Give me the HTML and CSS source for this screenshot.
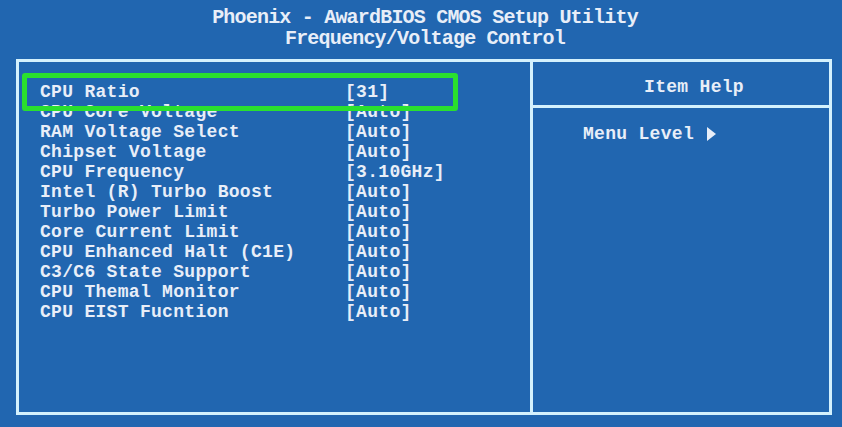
FILE: index.html
```html
<!DOCTYPE html>
<html>
<head>
<meta charset="utf-8">
<link rel="stylesheet" href="styles.css">
</head>
<body>
<div class="header">
  <div class="title">Phoenix - AwardBIOS CMOS Setup Utility</div>
  <div class="title">Frequency/Voltage Control</div>
</div>
<div class="screen">
  <div class="main">
    <div class="row"><span class="name">CPU Ratio</span><span class="val">[31]</span></div>
    <div class="row"><span class="name">CPU Core Voltage</span><span class="val">[Auto]</span></div>
    <div class="row"><span class="name">RAM Voltage Select</span><span class="val">[Auto]</span></div>
    <div class="row"><span class="name">Chipset Voltage</span><span class="val">[Auto]</span></div>
    <div class="row"><span class="name">CPU Frequency</span><span class="val">[3.10GHz]</span></div>
    <div class="row"><span class="name">Intel (R) Turbo Boost</span><span class="val">[Auto]</span></div>
    <div class="row"><span class="name">Turbo Power Limit</span><span class="val">[Auto]</span></div>
    <div class="row"><span class="name">Core Current Limit</span><span class="val">[Auto]</span></div>
    <div class="row"><span class="name">CPU Enhanced Halt (C1E)</span><span class="val">[Auto]</span></div>
    <div class="row"><span class="name">C3/C6 State Support</span><span class="val">[Auto]</span></div>
    <div class="row"><span class="name">CPU Themal Monitor</span><span class="val">[Auto]</span></div>
    <div class="row"><span class="name">CPU EIST Fucntion</span><span class="val">[Auto]</span></div>
  </div>
  <div class="help">
    <div class="help-head">Item Help</div>
    <div class="help-body">Menu Level <svg class="arrow" width="10" height="14" viewBox="0 0 10 14"><path d="M1 0 L10 7 L1 14 Z" fill="#e8eef8"/></svg></div>
  </div>
  <div class="highlight"></div>
</div>
</body>
</html>
```

FILE: styles.css
```css
html, body {
  margin: 0;
  padding: 0;
}
body {
  width: 842px;
  height: 427px;
  overflow: hidden;
  background: #2166b0;
  color: #e8eef8;
  font-family: "Liberation Mono", "DejaVu Sans Mono", monospace;
}
.header {
  padding-top: 7px;
  padding-left: 8px;
  height: 52px;
  box-sizing: border-box;
  text-align: center;
}
.title {
  font-size: 20px;
  line-height: 21px;
  letter-spacing: -0.8px;
  font-weight: bold;
}
.screen {
  position: relative;
  margin-top: 7px;
  margin-left: 16px;
  width: 816px;
  height: 356px;
  box-sizing: border-box;
  border: 3px solid #d4f1fd;
  display: flex;
}
.main {
  width: 514px;
  box-sizing: border-box;
  border-right: 3px solid #d4f1fd;
  padding-top: 20px;
  padding-left: 21px;
}
.row {
  display: flex;
  height: 20px;
  line-height: 20px;
  font-size: 18px;
  font-weight: bold;
  letter-spacing: 0.3px;
  white-space: pre;
}
.name {
  width: 305px;
}
.help {
  flex: 1;
  display: flex;
  flex-direction: column;
}
.help-head {
  height: 46px;
  box-sizing: border-box;
  border-bottom: 3px solid #d4f1fd;
  padding-top: 15px;
  padding-left: 26px;
  text-align: center;
  font-size: 18px;
  line-height: 20px;
  font-weight: bold;
  letter-spacing: 0.3px;
}
.help-body {
  padding-top: 16px;
  padding-left: 50px;
  font-size: 18px;
  line-height: 20px;
  font-weight: bold;
  letter-spacing: 0.3px;
  display: flex;
  align-items: center;
  gap: 12px;
}
.arrow {
  display: block;
}
.highlight {
  position: absolute;
  left: 3px;
  top: 11px;
  width: 436px;
  height: 38px;
  box-sizing: border-box;
  border: 5px solid #2ae02e;
  border-radius: 3px;
}
```
